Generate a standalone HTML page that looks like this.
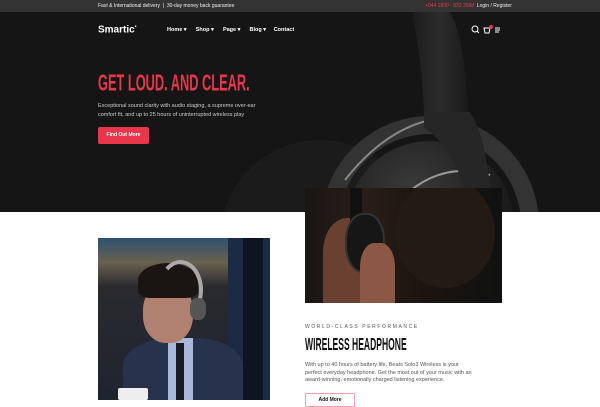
<!DOCTYPE html>
<html><head><style>
*{margin:0;padding:0;box-sizing:border-box}
body{width:600px;height:400px;overflow:hidden;background:#fff;font-family:"Liberation Sans",sans-serif;position:relative}
.abs{position:absolute}
.cond{font-weight:bold;display:inline-block;transform-origin:0 0;white-space:nowrap}
</style></head><body>
<div class="abs" style="left:0;top:0;width:600px;height:212px;background:#151515;overflow:hidden">
  <svg class="abs" style="left:0;top:0" width="600" height="212">
    <defs>
      <radialGradient id="g1" cx="0.4" cy="0.3" r="0.7"><stop offset="0" stop-color="#3a3a3a"/><stop offset="1" stop-color="#141414"/></radialGradient>
      <linearGradient id="g2" x1="0" x2="1"><stop offset="0" stop-color="#1c1c1c"/><stop offset="0.5" stop-color="#2c2c2c"/><stop offset="1" stop-color="#1a1a1a"/></linearGradient>
    </defs>
    <circle cx="320" cy="240" r="100" fill="#1b1b1b"/>
    <path d="M412 12 L450 12 Q465 40 468 112 L424 112 Q422 60 412 12Z" fill="url(#g2)"/>
    <circle cx="430" cy="225" r="100" fill="none" stroke="#333" stroke-width="18"/>
    <circle cx="430" cy="225" r="84" fill="url(#g1)"/>
    <path d="M345 180 Q400 110 470 118" stroke="#888" stroke-width="2" fill="none"/>
    <path d="M400 200 Q440 160 490 175" stroke="#999" stroke-width="2" fill="none"/>
    <path d="M424 112 L470 112 Q488 140 492 212 L468 212 Q460 150 424 128Z" fill="#262626"/>
  </svg>
  <div class="abs" style="left:0;top:0;width:600px;height:12px;background:#333"></div>
  <div class="abs" style="left:98px;top:3px;font-size:5px;color:#eee">Fast &amp; International delivery &nbsp;|&nbsp; 30-day money back guarantee</div>
  <div class="abs" style="left:425px;top:3px;font-size:5px;color:#e8364a">+044 1800 - 833 3588 <span style="color:#eee">&nbsp;Login / Register</span></div>
  <div class="abs" style="left:98px;top:24px;font-size:10px;color:#fff;font-weight:bold">Smartic<sup style="font-size:5px">•</sup></div>
  <div class="abs" style="left:167px;top:27px;font-size:5.5px;color:#fff;font-weight:bold">Home ▾&nbsp;&nbsp;&nbsp;&nbsp;&nbsp; Shop ▾&nbsp;&nbsp;&nbsp;&nbsp;&nbsp; Page ▾&nbsp;&nbsp;&nbsp;&nbsp;&nbsp; Blog ▾&nbsp;&nbsp;&nbsp;&nbsp; Contact</div>
  <svg class="abs" style="left:471px;top:25px" width="32" height="10" stroke="#fff" fill="none" stroke-width="1">
    <circle cx="4" cy="4" r="3"/><path d="M6 6 L8 8"/>
    <path d="M13 3 L19 3 L18 8 L14 8Z"/><circle cx="20" cy="2" r="2" fill="#e8364a" stroke="none"/>
    <path d="M24 3 H29 M24 5 H29 M24 7 H28"/>
  </svg>
  <div class="abs" style="left:98px;top:72px;color:#e8364a;font-size:20px;line-height:20px"><span class="cond" style="transform:scale(0.64,1.15)">GET LOUD. AND CLEAR.</span></div>
  <div class="abs" style="left:98px;top:102px;font-size:5.5px;line-height:9px;color:#ccc;width:170px">Exceptional sound clarity with audio staging, a supreme over-ear comfort fit, and up to 25 hours of uninterrupted wireless play</div>
  <div class="abs" style="left:98px;top:127px;width:51px;height:17px;background:#e8364a;border-radius:2px;color:#fff;font-size:5px;font-weight:bold;text-align:center;line-height:17px">Find Out More</div>
</div>
<div class="abs" style="left:305px;top:188px;width:197px;height:115px;background:linear-gradient(90deg,#1a1614 0%,#2a1d17 30%,#1c1410 60%,#111 100%);overflow:hidden">
  <div class="abs" style="left:90px;top:-10px;width:100px;height:110px;border-radius:50%;background:#241a14"></div>
  <div class="abs" style="left:18px;top:30px;width:60px;height:85px;border-radius:40% 30% 0 0;background:#6a4030"></div>
  <div class="abs" style="left:45px;top:-5px;width:12px;height:40px;background:#111"></div>
  <div class="abs" style="left:40px;top:25px;width:40px;height:60px;border-radius:45%;background:#161616;border:2px solid #333"></div>
  <div class="abs" style="left:55px;top:55px;width:35px;height:60px;border-radius:40% 40% 0 0;background:#8a5845"></div>
</div>
<div class="abs" style="left:98px;top:238px;width:172px;height:162px;background:linear-gradient(180deg,#2d5270 0%,#6a6050 15%,#2a2a2e 30%,#1e2430 100%);overflow:hidden">
  <div class="abs" style="left:130px;top:0;width:42px;height:162px;background:#1b2a45"></div>
  <div class="abs" style="left:145px;top:0;width:20px;height:162px;background:#0e1520"></div>
  <div class="abs" style="left:25px;top:100px;width:120px;height:70px;border-radius:40% 40% 0 0;background:#27324c"></div>
  <div class="abs" style="left:70px;top:100px;width:25px;height:62px;background:#a8b8d8"></div>
  <div class="abs" style="left:78px;top:105px;width:8px;height:57px;background:#1a1a22"></div>
  <div class="abs" style="left:45px;top:45px;width:50px;height:60px;border-radius:45%;background:#b08070"></div>
  <div class="abs" style="left:40px;top:25px;width:60px;height:35px;border-radius:50% 50% 20% 20%;background:#1a1412"></div>
  <div class="abs" style="left:60px;top:22px;width:45px;height:60px;border-radius:50%;border:4px solid #aaa;border-bottom-color:transparent;border-left-color:transparent"></div>
  <div class="abs" style="left:92px;top:60px;width:16px;height:22px;border-radius:40%;background:#555"></div>
  <div class="abs" style="left:20px;top:150px;width:30px;height:12px;background:#eee;border-radius:2px"></div>
</div>
<div class="abs" style="left:305px;top:324px;font-size:5px;letter-spacing:1.6px;color:#555">WORLD-CLASS PERFORMANCE</div>
<div class="abs" style="left:305px;top:336px;color:#111;font-size:15px;line-height:15px"><span class="cond" style="transform:scale(0.57,1.15)">WIRELESS HEADPHONE</span></div>
<div class="abs" style="left:305px;top:362px;font-size:5.5px;line-height:7.6px;color:#555;width:170px">With up to 40 hours of battery life, Beats Solo3 Wireless is your perfect everyday headphone. Get the most out of your music with an award-winning, emotionally charged listening experience.</div>
<div class="abs" style="left:305px;top:393px;width:50px;height:14px;border:1px solid #f0a0aa;border-radius:2px;font-size:5px;text-align:center;line-height:12px;color:#111;font-weight:bold">Add More</div>
</body></html>
